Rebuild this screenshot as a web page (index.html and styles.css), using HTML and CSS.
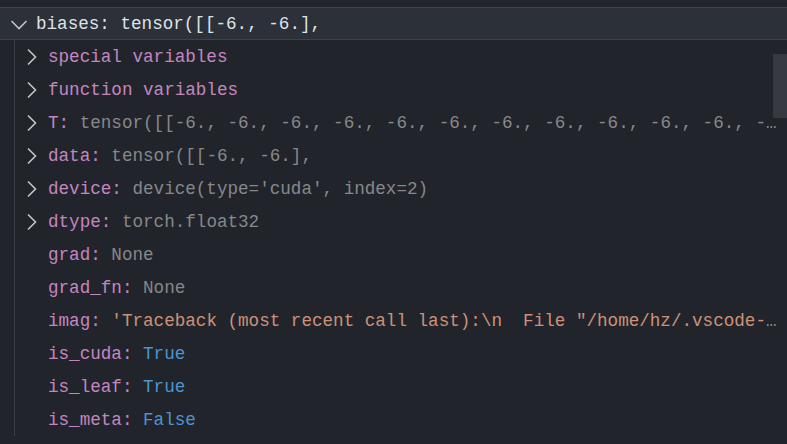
FILE: index.html
```html
<!DOCTYPE html>
<html lang="en">
<head>
    <meta charset="UTF-8">
    <title>Variables</title>
    <link rel="stylesheet" href="styles.css">
</head>
<body>
    <div class="variables">
        <div class="row ghost">
            <span class="twistie"></span>
            <span class="label"><span class="name">acti_fn:</span> <span class="value">(j, j, j, q, j, p, g, y, j)</span></span>
        </div>

        <div class="row selected">
            <span class="twistie"><svg width="24" height="24" viewBox="0 0 24 24"><polyline points="4.5,9 12,16.5 19.5,9"/></svg></span>
            <span class="label"><span class="name">biases:</span> <span class="value">tensor([[-6., -6.],</span></span>
        </div>

        <div class="children">
            <div class="row">
                <span class="twistie"><svg width="24" height="24" viewBox="0 0 24 24"><polyline points="9,4.5 16.5,12 9,19.5"/></svg></span>
                <span class="label"><span class="name">special variables</span></span>
            </div>
            <div class="row">
                <span class="twistie"><svg width="24" height="24" viewBox="0 0 24 24"><polyline points="9,4.5 16.5,12 9,19.5"/></svg></span>
                <span class="label"><span class="name">function variables</span></span>
            </div>
            <div class="row">
                <span class="twistie"><svg width="24" height="24" viewBox="0 0 24 24"><polyline points="9,4.5 16.5,12 9,19.5"/></svg></span>
                <span class="label"><span class="name">T:</span> <span class="value">tensor([[-6., -6., -6., -6., -6., -6., -6., -6., -6., -6., -6., -6., -6., -6., -6., -6.],</span></span>
            </div>
            <div class="row">
                <span class="twistie"><svg width="24" height="24" viewBox="0 0 24 24"><polyline points="9,4.5 16.5,12 9,19.5"/></svg></span>
                <span class="label"><span class="name">data:</span> <span class="value">tensor([[-6., -6.],</span></span>
            </div>
            <div class="row">
                <span class="twistie"><svg width="24" height="24" viewBox="0 0 24 24"><polyline points="9,4.5 16.5,12 9,19.5"/></svg></span>
                <span class="label"><span class="name">device:</span> <span class="value">device(type='cuda', index=2)</span></span>
            </div>
            <div class="row">
                <span class="twistie"><svg width="24" height="24" viewBox="0 0 24 24"><polyline points="9,4.5 16.5,12 9,19.5"/></svg></span>
                <span class="label"><span class="name">dtype:</span> <span class="value">torch.float32</span></span>
            </div>
            <div class="row">
                <span class="twistie"></span>
                <span class="label"><span class="name">grad:</span> <span class="value">None</span></span>
            </div>
            <div class="row">
                <span class="twistie"></span>
                <span class="label"><span class="name">grad_fn:</span> <span class="value">None</span></span>
            </div>
            <div class="row">
                <span class="twistie"></span>
                <span class="label"><span class="name">imag:</span> <span class="value string">'Traceback (most recent call last):\n  File "/home/hz/.vscode-server/extensions/ms-python.python/pythonFiles/lib/python/debugpy/_vendored/pydevd/_pydevd_bundle/pydevd_resolver.py"'</span></span>
            </div>
            <div class="row">
                <span class="twistie"></span>
                <span class="label"><span class="name">is_cuda:</span> <span class="value boolean">True</span></span>
            </div>
            <div class="row">
                <span class="twistie"></span>
                <span class="label"><span class="name">is_leaf:</span> <span class="value boolean">True</span></span>
            </div>
            <div class="row">
                <span class="twistie"></span>
                <span class="label"><span class="name">is_meta:</span> <span class="value boolean">False</span></span>
            </div>
        </div>
    </div>

    <div class="scrollbar"></div>
</body>
</html>
```

FILE: styles.css
```css
html, body {
    margin: 0;
    padding: 0;
    height: 100%;
    overflow: hidden;
}
body {
    background-color: #21252b;
    font-family: "Liberation Mono", "DejaVu Sans Mono", monospace;
    font-size: 17.6px;
    color: #d7dae0;
}
.variables {
    width: 787px;
}
.row {
    display: flex;
    align-items: center;
    height: 33px;
    box-sizing: border-box;
    padding-left: 4px;
    overflow: hidden;
}
.twistie {
    flex: 0 0 24px;
    width: 24px;
    height: 24px;
    margin-right: 5px;
}
.twistie svg {
    display: block;
    fill: none;
    stroke: #c5c5c5;
    stroke-width: 1.6;
}
.label {
    flex: 1;
    min-width: 0;
    white-space: pre;
    overflow: hidden;
    text-overflow: ellipsis;
    line-height: 33px;
    padding-top: 2px;
    color: rgba(204, 204, 204, 0.6);
}
.name {
    color: #c586c0;
}
.value {
    color: rgba(204, 204, 204, 0.6);
}
.value.string {
    color: #ce9178;
}
.value.boolean {
    color: #4e94ce;
}
.ghost {
    margin-top: -26px;
    padding-left: 7px;
    align-items: flex-end;
}
.ghost .label {
    padding-top: 0;
    margin-bottom: -1px;
}
.selected {
    padding-left: 7px;
    background-color: #2c3038;
    border-top: 1px solid #3d424c;
    border-bottom: 1px solid #3d424c;
}
.selected .label,
.selected .name,
.selected .value {
    color: #dfe2e8;
}
.children {
    margin-left: 14px;
    border-left: 1px solid #3b3f48;
}
.scrollbar {
    position: absolute;
    top: 54px;
    right: 0;
    width: 14px;
    height: 64px;
    background-color: rgba(79, 84, 94, 0.45);
}
```
